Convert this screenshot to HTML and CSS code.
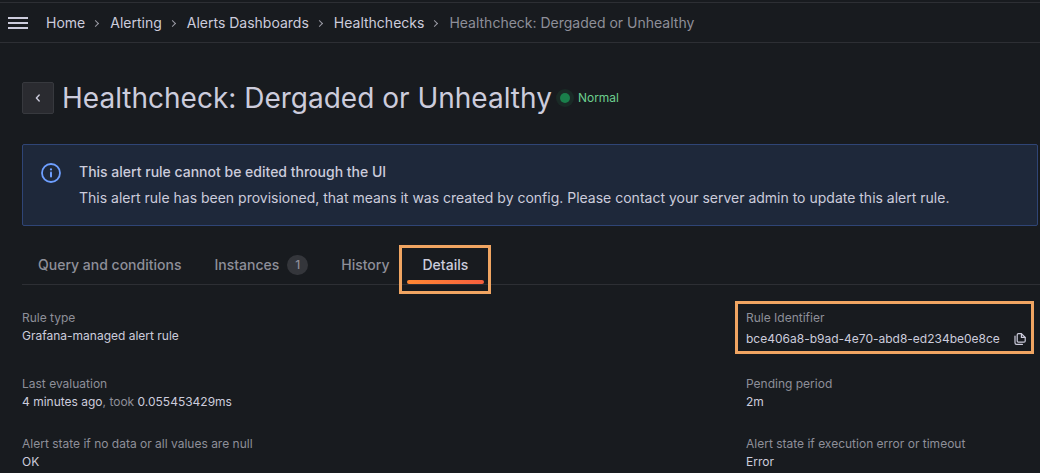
FILE: index.html
```
<!DOCTYPE html>
<html lang="en">
<head>
    <meta charset="utf-8">
    <title>Healthcheck: Dergaded or Unhealthy - Alerting - Grafana</title>
    <link rel="stylesheet" href="styles.css">
</head>
<body>
    <header class="topbar">
        <button class="menu-button" type="button" aria-label="Open menu">
            <svg width="20" height="12" viewBox="0 0 20 12" fill="currentColor">
                <rect width="20" height="2"/>
                <rect y="5" width="20" height="2"/>
                <rect y="10" width="20" height="2"/>
            </svg>
        </button>
        <nav aria-label="Breadcrumbs">
            <ol class="breadcrumbs">
                <li><a href="#">Home</a></li>
                <li><a href="#">Alerting</a></li>
                <li><a href="#">Alerts Dashboards</a></li>
                <li><a href="#">Healthchecks</a></li>
                <li class="current">Healthcheck: Dergaded or Unhealthy</li>
            </ol>
        </nav>
    </header>

    <main>
        <div class="title-row">
            <button class="back-button" type="button" aria-label="Go back">
                <svg width="6" height="8" viewBox="0 0 6 8" fill="none" stroke="currentColor" stroke-width="1.4" stroke-linecap="round" stroke-linejoin="round">
                    <path d="M4.2 1 L1.4 4 L4.2 7"/>
                </svg>
            </button>
            <h1>Healthcheck: Dergaded or Unhealthy</h1>
            <span class="state"><span class="state-dot"></span>Normal</span>
        </div>

        <div class="alert" role="status">
            <svg class="alert-icon" width="20" height="20" viewBox="0 0 20 20" fill="none" stroke="currentColor" stroke-width="1.8">
                <circle cx="10" cy="10" r="9"/>
                <path d="M10 9.5 V13.5" stroke-width="2" stroke-linecap="round"/>
                <circle cx="10" cy="6.4" r="1.1" fill="currentColor" stroke="none"/>
            </svg>
            <div>
                <div class="alert-title">This alert rule cannot be edited through the UI</div>
                <div class="alert-text">This alert rule has been provisioned, that means it was created by config. Please contact your server admin to update this alert rule.</div>
            </div>
        </div>

        <nav class="tabs">
            <a class="tab" href="#">Query and conditions</a>
            <a class="tab" href="#">Instances<span class="counter">1</span></a>
            <a class="tab" href="#">History</a>
            <a class="tab active" href="#">Details</a>
        </nav>

        <dl class="details">
            <div>
                <dt>Rule type</dt>
                <dd>Grafana-managed alert rule</dd>
            </div>
            <div class="identifier">
                <dt>Rule Identifier</dt>
                <dd>
                    bce406a8-b9ad-4e70-abd8-ed234be0e8ce
                    <button class="copy-button" type="button" aria-label="Copy rule identifier">
                        <svg width="12" height="12" viewBox="0 0 12 12" fill="none" stroke="currentColor" stroke-width="1.2" stroke-linecap="round" stroke-linejoin="round">
                            <path d="M7.4 .7 H4.4 Q3.2 .7 3.2 1.9 V8 Q3.2 9.2 4.4 9.2 H10 Q11.2 9.2 11.2 8 V4.5 Z"/>
                            <path d="M7.4 .9 V4.4 H11"/>
                            <path d="M1 3 V9.8 Q1 11.4 2.6 11.4 H8.4"/>
                        </svg>
                    </button>
                </dd>
            </div>
            <div>
                <dt>Last evaluation</dt>
                <dd>4 minutes ago<span class="muted">, took</span> 0.055453429ms</dd>
            </div>
            <div>
                <dt>Pending period</dt>
                <dd>2m</dd>
            </div>
            <div>
                <dt>Alert state if no data or all values are null</dt>
                <dd>OK</dd>
            </div>
            <div>
                <dt>Alert state if execution error or timeout</dt>
                <dd>Error</dd>
            </div>
        </dl>
    </main>
</body>
</html>
```
FILE: styles.css
```
body {
    margin: 0;
    padding-top: 2px;
    background-color: #181b1f;
    color: #ccccdc;
    font-family: Inter, "Liberation Sans", sans-serif;
    font-size: 14px;
    line-height: 22px;
}
a {
    color: inherit;
    text-decoration: none;
}
button {
    padding: 0;
    border: none;
    background: none;
    color: inherit;
    cursor: pointer;
}
svg {
    display: block;
}

/* top bar */
.topbar {
    display: flex;
    align-items: center;
    gap: 18px;
    height: 39px;
    padding: 0 8px;
    border-top: 1px solid #2d2f34;
    border-bottom: 1px solid #2d2f34;
}
.breadcrumbs {
    display: flex;
    margin: 0;
    padding: 0;
    list-style: none;
}
.breadcrumbs li {
    display: flex;
    align-items: center;
}
.breadcrumbs li + li::before {
    content: "";
    width: 4px;
    height: 4px;
    margin: 2px 12px 0 8px;
    border-top: 1px solid #9a9ba5;
    border-right: 1px solid #9a9ba5;
    transform: rotate(45deg);
}
.breadcrumbs .current {
    color: #8e8f99;
}

/* page */
main {
    padding: 39px 0 0 22px;
}
.title-row {
    display: flex;
    align-items: center;
    gap: 8px;
}
.back-button {
    display: flex;
    align-items: center;
    justify-content: center;
    width: 32px;
    height: 32px;
    border: 1px solid #37393e;
    border-radius: 2px;
    background-color: #2a2b30;
}
h1 {
    margin: 0;
    font-size: 28px;
    font-weight: 400;
    line-height: 32px;
}
.state {
    display: flex;
    align-items: center;
    gap: 8px;
    color: #6ccf8e;
    font-size: 12px;
}
.state-dot {
    width: 10px;
    height: 10px;
    border-radius: 50%;
    background-color: #1a7f4b;
    box-shadow: 0 0 0 4px #1a2a26;
}

.alert {
    display: flex;
    gap: 18px;
    margin: 30px 2px 0 0;
    padding: 14px 18px 16px;
    border: 1px solid #2f4576;
    border-radius: 2px;
    background-color: #1e283a;
}
.alert-icon {
    flex: none;
    margin-top: 4px;
    color: #6e9fff;
}
.alert-title {
    margin: 2px 0 4px;
    font-weight: 500;
}

/* tabs */
.tabs {
    display: flex;
    gap: 1px;
    margin-top: 20px;
    border-bottom: 1px solid #2d2f34;
}
.tab {
    position: relative;
    display: flex;
    align-items: center;
    height: 38px;
    padding: 0 16px;
    color: #8e8f99;
    font-weight: 500;
}
.counter {
    margin-left: 8px;
    padding: 0 8px;
    border-radius: 10px;
    background-color: #34363b;
    font-size: 12px;
    line-height: 20px;
}
.tab.active {
    color: #ccccdc;
}
.tab.active::before {
    content: "";
    position: absolute;
    left: 0;
    right: 0;
    bottom: 0;
    height: 4px;
    border-radius: 2px;
    background-image: linear-gradient(90deg, #ff8833, #f55f3e);
}
.tab.active::after,
.identifier::after {
    content: "";
    position: absolute;
    border: 3px solid #f0a562;
    pointer-events: none;
}
.tab.active::after {
    inset: -1px -7px -10px -8px;
}

/* rule details */
.details {
    display: grid;
    grid-template-columns: 1fr 294px;
    row-gap: 24px;
    margin: 24px 0 0;
    font-size: 12px;
    line-height: 18px;
}
.identifier {
    position: relative;
}
.identifier::after {
    inset: -8px 6px -3px -11px;
}
dt,
.muted {
    color: #8e8f99;
}
dd {
    margin: 0;
}
.identifier dd {
    display: flex;
    align-items: center;
    gap: 14px;
    height: 24px;
}
```
